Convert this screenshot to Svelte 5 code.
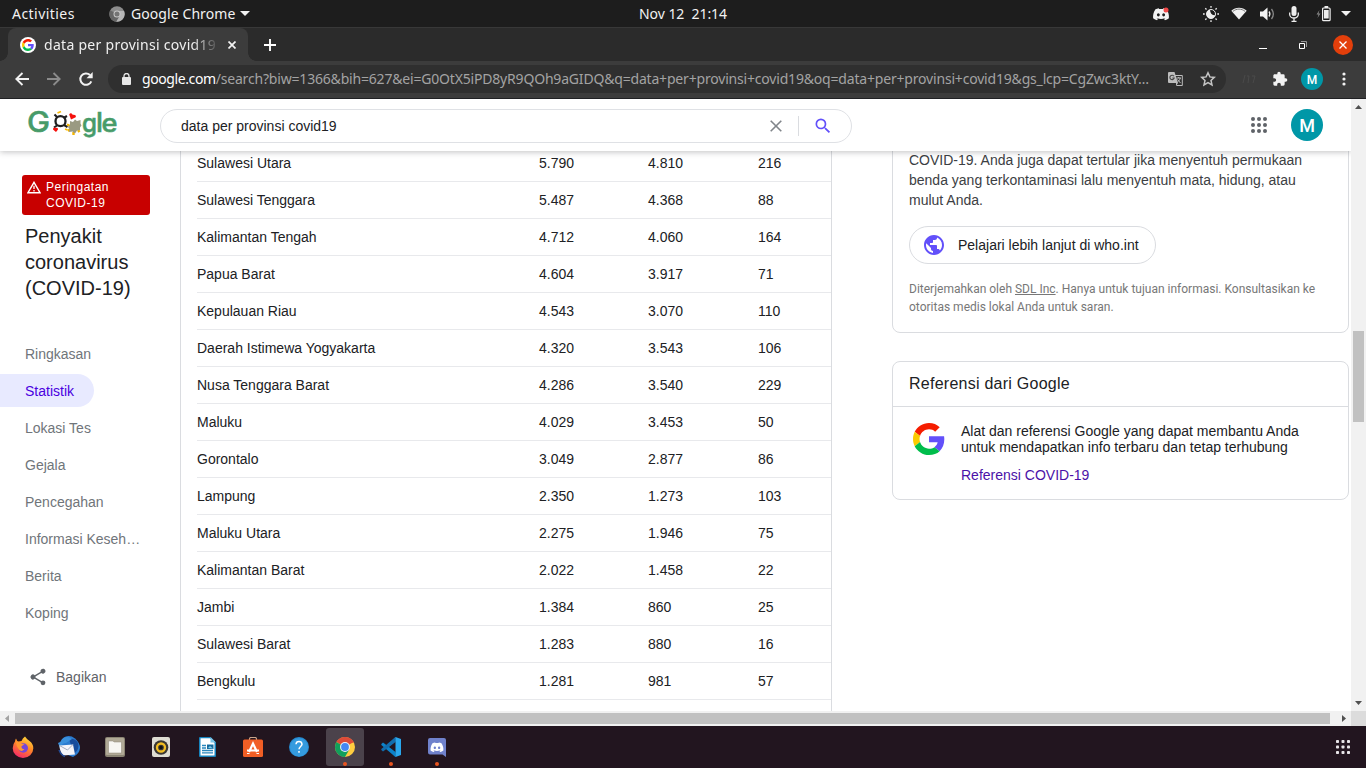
<script>
  const rows = [
    ['Sulawesi Utara', '5.790', '4.810', '216'],
    ['Sulawesi Tenggara', '5.487', '4.368', '88'],
    ['Kalimantan Tengah', '4.712', '4.060', '164'],
    ['Papua Barat', '4.604', '3.917', '71'],
    ['Kepulauan Riau', '4.543', '3.070', '110'],
    ['Daerah Istimewa Yogyakarta', '4.320', '3.543', '106'],
    ['Nusa Tenggara Barat', '4.286', '3.540', '229'],
    ['Maluku', '4.029', '3.453', '50'],
    ['Gorontalo', '3.049', '2.877', '86'],
    ['Lampung', '2.350', '1.273', '103'],
    ['Maluku Utara', '2.275', '1.946', '75'],
    ['Kalimantan Barat', '2.022', '1.458', '22'],
    ['Jambi', '1.384', '860', '25'],
    ['Sulawesi Barat', '1.283', '880', '16'],
    ['Bengkulu', '1.281', '981', '57']
  ];
  const nav = ['Ringkasan', 'Statistik', 'Lokasi Tes', 'Gejala', 'Pencegahan', 'Informasi Keseh…', 'Berita', 'Koping'];
  const dots = [0, 1, 2, 3, 4, 5, 6, 7, 8];
</script>

{#snippet googleG()}
  <path fill="#f51d00" d="M24 9.5c3.54 0 6.71 1.22 9.21 3.6l6.85-6.85C35.9 2.38 30.47 0 24 0 14.62 0 6.51 5.38 2.56 13.22l7.98 6.19C12.43 13.72 17.74 9.5 24 9.5z" />
  <path fill="#6250fa" d="M46.98 24.55c0-1.57-.15-3.09-.38-4.55H24v9.02h12.94c-.58 2.96-2.26 5.48-4.78 7.18l7.73 6c4.51-4.18 7.09-10.36 7.09-17.65z" />
  <path fill="#fbcb00" d="M10.53 28.59c-.48-1.45-.76-2.99-.76-4.59s.27-3.14.76-4.59l-7.98-6.19C.92 16.46 0 20.12 0 24c0 3.88.92 7.54 2.56 10.78l7.97-6.19z" />
  <path fill="#00bd4b" d="M24 48c6.48 0 11.93-2.13 15.89-5.81l-7.73-6c-2.15 1.45-4.92 2.3-8.16 2.3-6.26 0-11.57-4.22-13.47-9.91l-7.98 6.19C6.51 42.62 14.62 48 24 48z" />
{/snippet}

{#snippet discord(color)}
  <path fill={color} fill-rule="evenodd" d="M13.55 3.2A13 13 0 0 0 10.3 2.2l-.42.86a12 12 0 0 0-3.76 0L5.7 2.2a13 13 0 0 0-3.25 1C.4 6.3-.15 9.3.12 12.25A13 13 0 0 0 4.1 14.2l.85-1.35-1.3-.65.3-.25a9.400 9.400 0 0 0 8.1 0l.3.25-1.3.65.85 1.35a13 13 0 0 0 3.98-1.950c.35-3.400-.55-6.400-2.330-9.050zM5.350 10.400c-.800 0-1.430-.720-1.430-1.600s.600-1.600 1.430-1.600 1.450.720 1.430 1.600c0 .880-.640 1.600-1.430 1.600zm5.300 0c-.790 0-1.430-.720-1.430-1.600s.600-1.600 1.430-1.600 1.450.720 1.430 1.600c0 .880-.630 1.600-1.430 1.600z" />
{/snippet}

<div class="screen">
  <div class="topbar">
    <span class="activities">Activities</span>
    <svg class="app-ico" width="16" height="16" viewBox="0 0 16 16">
      <circle cx="8" cy="8" r="7.700" fill="#8c8c8c" />
      <path d="M8 8 1.300 4.200A7.700 7.700 0 0 0 7.300 15.700L10.500 10z" fill="#666" />
      <path d="M8 5h7a7.700 7.700 0 0 1-7.700 10.700L11 9.500z" fill="#b5b5b5" />
      <circle cx="8" cy="8" r="3.500" fill="#c8c8c8" />
      <circle cx="8" cy="8" r="2.500" fill="#747474" />
    </svg>
    <span class="appname">Google Chrome</span>
    <svg class="down" width="10" height="5" viewBox="0 0 10 5"><path d="M0 0h10L5 5z" fill="#f2f2f2" /></svg>
    <span class="clock">Nov 12&nbsp; 21:14</span>
    <div class="tray">
      <svg width="18" height="16" viewBox="0 0 18 16">
        <g transform="translate(1 0)">{@render discord('#f2f2f2')}</g>
        <circle cx="14" cy="4" r="2.500" fill="#f04747" />
      </svg>
      <svg class="t2" width="16" height="16" viewBox="0 0 16 16" stroke="#eee" stroke-width="1.300">
        <path d="M8 0v1.700M8 14.300V16M0 8h1.700M14.300 8H16M2.300 2.300l1.200 1.200M12.500 12.500l1.200 1.200M2.300 13.700l1.200-1.200M12.500 3.500l1.200-1.200" />
        <circle cx="8" cy="8" r="4.500" fill="none" stroke-width="1" />
        <path d="M7 3.800a4.400 4.400 0 1 0 5.300 5.300Q7.500 10 7 3.800z" fill="#eee" stroke="none" />
      </svg>
      <svg class="t3" width="16" height="13" viewBox="0 0 16 13">
        <path d="M.3 3.800C4.500-.3 11.500-.3 15.700 3.800L8 12.500z" fill="#f2f2f2" />
        <path d="M1.800 4.500C5.500 1.300 10.500 1.300 14.200 4.500" stroke="#777" fill="none" />
      </svg>
      <svg class="t4" width="15" height="14" viewBox="0 0 15 14">
        <path d="M0 4.500h3L7.500.5v13L3 9.500H0z" fill="#f2f2f2" />
        <path d="M9 4.500q1.800 2.500 0 5" fill="none" stroke="#eee" stroke-width="1.300" />
        <path d="M11.500 2q3.700 5 0 10" fill="none" stroke="#888" stroke-width="1.300" />
      </svg>
      <svg class="t5" width="10" height="16" viewBox="0 0 10 16">
        <rect x="2.500" width="5" height="10" rx="2.500" fill="#eee" />
        <path d="M.7 6.500v2a4.300 3.500 0 0 0 8.600 0v-2M5 12v3M2.500 15.300h5" fill="none" stroke="#eee" stroke-width="1.300" />
      </svg>
      <svg class="t6" width="15" height="16" viewBox="0 0 15 16">
        <path d="M3.500 4 .5 8.500h2L1.500 12l3-4.500h-2z" fill="#888" />
        <rect x="6.600" y="2" width="7.500" height="12.700" rx="1" fill="none" stroke="#eee" stroke-width="1.200" />
        <path d="M8 4h4.700v8.500H8zM8.500 0h3.700v2H8.500z" fill="#eee" />
      </svg>
      <svg class="t7" width="10" height="5" viewBox="0 0 10 5"><path d="M0 0h10L5 5z" fill="#f2f2f2" /></svg>
    </div>
  </div>

  <div class="tabstrip">
    <div class="tab">
      <svg class="fav" width="16" height="16" viewBox="0 0 16 16">
        <circle cx="8" cy="8" r="8" fill="#fff" />
        <g transform="translate(2 2) scale(.25)">{@render googleG()}</g>
      </svg>
      <span class="tabtitle">data per provinsi covid19</span>
      <svg width="8" height="8" viewBox="0 0 8 8"><path d="M.5.5l7 7M7.500.5l-7 7" stroke="#f2f2f2" stroke-width="1.700" /></svg>
    </div>
    <svg class="plus" width="12" height="12" viewBox="0 0 12 12"><path d="M6 0v12M0 6h12" stroke="#fff" stroke-width="1.900" /></svg>
    <div class="winctl">
      <svg width="8" height="8" viewBox="0 0 8 8"><path d="M0 7.500h8" stroke="#fff" /></svg>
      <svg width="8" height="8" viewBox="0 0 8 8"><path d="M.5 2.500h5v5h-5z" fill="none" stroke="#fff" /><path d="M2 .5h5.500V6" fill="none" stroke="#999" /></svg>
      <svg width="20" height="20" viewBox="0 0 20 20"><circle cx="10" cy="10" r="10" fill="#e33f0b" /><path d="M6.500 6.500l7 7M13.500 6.500l-7 7" stroke="#fff" stroke-width="1.300" /></svg>
    </div>
  </div>

  <div class="toolbar">
    <svg class="back" width="14" height="14" viewBox="0 0 14 14"><path d="M14 7H1.500M7.500 1 1.300 7l6.200 6" fill="none" stroke="#f2f2f2" stroke-width="1.900" /></svg>
    <svg class="fwd" width="14" height="14" viewBox="0 0 14 14"><path d="M0 7h12.500M6.500 1l6.200 6-6.200 6" fill="none" stroke="#8b8b8b" stroke-width="1.900" /></svg>
    <svg class="reload" width="16" height="16" viewBox="0 0 16 16"><path d="M13.300 10.300A5.700 5.700 0 1 1 12 4" fill="none" stroke="#f2f2f2" stroke-width="2" /><path d="M14.700 1v6.200H8.500z" fill="#f2f2f2" /></svg>
    <div class="omni">
      <svg class="lock" width="9" height="12" viewBox="0 0 9 12"><rect y="4" width="9" height="8" rx="1" fill="#e8e8e8" /><path d="M2 5V3a2.500 2.500 0 0 1 5 0v2" fill="none" stroke="#e8e8e8" stroke-width="1.300" /></svg>
      <span class="url"><b>google.com</b><span class="path">/search?biw=1366&amp;bih=627&amp;ei=G0OtX5iPD8yR9QOh9aGIDQ&amp;q=data+per+provinsi+covid19&amp;oq=data+per+provinsi+covid19&amp;gs_lcp=CgZwc3ktY…</span></span>
      <svg class="trans" width="15" height="14" viewBox="0 0 15 14">
        <path d="M6 3.500h8.300v10H8.500" fill="none" stroke="#bdbdbd" />
        <path d="M1 0h5.500L10 11H1a1 1 0 0 1-1-1V1a1 1 0 0 1 1-1z" fill="#bdbdbd" />
        <path d="M6 4.300A2.200 2.200 0 1 0 6.200 6H4.300" fill="none" stroke="#444" stroke-width="1.100" />
        <path d="M8.500 6H13M10.700 5v1M12.300 6c-.5 2-1.500 3-2.600 3.800M9.500 7.500l3 3.500" fill="none" stroke="#bdbdbd" />
        <path d="M10 11l-2 3V11z" fill="#bdbdbd" />
      </svg>
      <svg class="star" width="16" height="16" viewBox="0 0 16 16"><path d="M8 1.800l1.900 4.100 4.400.5-3.300 3 1 4.500L8 11.600l-4 2.300 1-4.500-3.300-3 4.400-.5z" fill="none" stroke="#c4c4c4" stroke-width="1.500" /></svg>
    </div>
    <svg class="faint" width="14" height="10" viewBox="0 0 14 10"><path d="M1 9l2-8M6 9l1-7h-2M11 9l2-7h-3" fill="none" stroke="#4a4a4a" /></svg>
    <svg class="puzzle" width="16" height="16" viewBox="0 0 24 24"><path fill="#f2f2f2" d="M20.500 11H19V7a2 2 0 0 0-2-2h-4V3.500a2.500 2.500 0 0 0-5 0V5H4c-1.100 0-1.990.9-1.990 2v3.800H3.500c1.490 0 2.700 1.210 2.700 2.700s-1.210 2.700-2.700 2.700H2V20a2 2 0 0 0 2 2h3.800v-1.500c0-1.490 1.210-2.700 2.700-2.700s2.700 1.210 2.700 2.700V22H17a2 2 0 0 0 2-2v-4h1.500a2.500 2.500 0 0 0 0-5z" /></svg>
    <span class="ava small">M</span>
    <svg class="kebab" width="4" height="14" viewBox="0 0 4 14" fill="#f2f2f2"><circle cx="2" cy="2" r="1.600" /><circle cx="2" cy="7" r="1.600" /><circle cx="2" cy="12" r="1.600" /></svg>
  </div>

  <div class="browser">
    <div class="page">
      <header>
        <svg class="logo" width="92" height="42" viewBox="0 -5 92 42" font-family="Inter, sans-serif" font-weight="500" fill="#479b69">
          <g stroke="#479b69" stroke-width=".5">
            <text x="0" y="22.500" font-size="28" textLength="23" lengthAdjust="spacingAndGlyphs">G</text>
            <text x="55" y="22.500" font-size="24.500" textLength="15" lengthAdjust="spacingAndGlyphs">g</text>
            <text x="69" y="22.500" font-size="27" textLength="7" lengthAdjust="spacingAndGlyphs">l</text>
            <text x="74.500" y="22.500" font-size="24.500" textLength="16" lengthAdjust="spacingAndGlyphs">e</text>
          </g>
          <circle cx="33.500" cy="12.200" r="5" fill="#fff" stroke="#202020" stroke-width="2.300" />
          <path d="M27.500 5.500l3 3M40 7l-3.500 2M27 18.500l3-2M40.500 18l-3.500-2" stroke="#202020" stroke-width="2.100" />
          <path d="M30.500 4l3.500-1.500M38 20l2.500 1" stroke="#fbbc05" stroke-width="1.800" />
          <path d="M29 23l-3-2.500q0-2.800 2.700-1.500 2.500-1 2.300 1.500z" fill="#f5100c" />
          <path d="M44 10.500l-1.800-5q1.500-2.500 3.500.3 4-.5 3 2.500z" fill="#f5100c" />
          <path d="M40 15.500l3 1.500M46.500 26v-3M41 22l2.500-2M52.500 23l-1.500-2" stroke="#f4b400" stroke-width="2.400" />
          <path d="M43 12l3 1 2-2.500 2 1.500 3.500-1v3.500l1 2-1.500 2v2.500l-3 .5-2 3-2.500-2-3.500.5.500-3-1.500-2 2-2z" fill="#9a9a82" />
        </svg>
        <div class="search">
          <span>data per provinsi covid19</span>
          <svg class="clear" width="12" height="12" viewBox="0 0 12 12"><path d="M.7.7l10.600 10.600M11.300.7.7 11.300" stroke="#80858a" stroke-width="1.600" /></svg>
          <i></i>
          <svg class="mag" width="20" height="20" viewBox="0 0 24 24"><path fill="#6250fa" d="M15.500 14h-.79l-.28-.27A6.471 6.471 0 0 0 16 9.500 6.500 6.500 0 1 0 9.500 16c1.610 0 3.090-.59 4.230-1.570l.27.28v.79l5 4.990L20.490 19l-4.990-5zm-6 0C7.010 14 5 11.990 5 9.500S7.010 5 9.500 5 14 7.010 14 9.500 11.990 14 9.500 14z" /></svg>
        </div>
        <svg class="apps" width="16" height="16" viewBox="0 0 16 16" fill="#5f6368">
          {#each dots as d}<circle cx={2 + (d % 3) * 6} cy={2 + Math.floor(d / 3) * 6} r="2" />{/each}
        </svg>
        <span class="ava">M</span>
      </header>
      <main>
        <aside>
          <div class="alert">
            <svg width="14" height="13" viewBox="0 0 14 13"><path d="M7 1.300 13 11.700H1z" fill="none" stroke="#fff" stroke-width="1.400" /><path d="M7 4.800v3.200M7 9v1.400" stroke="#fff" stroke-width="1.300" /></svg>
            <span>Peringatan<br />COVID-19</span>
          </div>
          <h1>Penyakit<br />coronavirus<br />(COVID-19)</h1>
          <nav>
            {#each nav as item}
              <div class="navitem" class:active={item === 'Statistik'}>{item}</div>
            {/each}
          </nav>
          <div class="share">
            <svg width="20" height="20" viewBox="0 0 24 24"><path fill="#5f6368" d="M18 16.080c-.76 0-1.440.3-1.960.77L8.910 12.700c.05-.23.09-.46.09-.7s-.04-.47-.09-.7l7.050-4.110A3 3 0 1 0 15 5c0 .24.04.47.09.7L8.040 9.810a3 3 0 1 0 0 4.380l7.120 4.160c-.05.21-.08.43-.08.65a2.920 2.920 0 1 0 2.920-2.920z" /></svg>
            <span>Bagikan</span>
          </div>
        </aside>
        <section class="tablecard">
          {#each rows as r}
            <div class="row">{#each r as cell}<span>{cell}</span>{/each}</div>
          {/each}
        </section>
        <div class="right">
          <section class="card info">
            <p>COVID-19. Anda juga dapat tertular jika menyentuh permukaan<br />benda yang terkontaminasi lalu menyentuh mata, hidung, atau<br />mulut Anda.</p>
            <div class="pill">
              <svg width="24" height="24" viewBox="0 0 24 24"><path fill="#6250fa" d="M12 2C6.480 2 2 6.480 2 12s4.480 10 10 10 10-4.480 10-10S17.520 2 12 2zm-1 17.930c-3.950-.49-7-3.850-7-7.930 0-.62.08-1.210.21-1.790L9 15v1c0 1.100.9 2 2 2v1.930zm6.900-2.540c-.26-.81-1-1.390-1.900-1.390h-1v-3c0-.55-.45-1-1-1H8v-2h2c.55 0 1-.45 1-1V7h2c1.100 0 2-.9 2-2v-.41c2.930 1.190 5 4.060 5 7.410 0 2.080-.8 3.970-2.100 5.390z" /></svg>
              <span>Pelajari lebih lanjut di who.int</span>
            </div>
            <small>Diterjemahkan oleh <u>SDL Inc</u>. Hanya untuk tujuan informasi. Konsultasikan ke<br />otoritas medis lokal Anda untuk saran.</small>
          </section>
          <section class="card refs">
            <h2>Referensi dari Google</h2>
            <div class="refbody">
              <svg width="32" height="32" viewBox="0 0 48 48">{@render googleG()}</svg>
              <div>
                <span class="desc">Alat dan referensi Google yang dapat membantu Anda<br />untuk mendapatkan info terbaru dan tetap terhubung</span>
                <span class="link">Referensi COVID-19</span>
              </div>
            </div>
          </section>
        </div>
      </main>
    </div>
    <div class="vscroll">
      <svg width="7" height="4" viewBox="0 0 7 4"><path d="M0 4h7L3.500 0z" fill="#505050" /></svg>
      <div class="vthumb"></div>
      <svg width="7" height="4" viewBox="0 0 7 4"><path d="M0 0h7L3.500 4z" fill="#505050" /></svg>
    </div>
    <div class="hscroll">
      <svg width="4" height="7" viewBox="0 0 4 7"><path d="M4 0v7L0 3.500z" fill="#a3a3a3" /></svg>
      <div class="hthumb"></div>
      <svg width="4" height="7" viewBox="0 0 4 7"><path d="M0 0v7l4-3.500z" fill="#505050" /></svg>
    </div>
    <div class="corner"></div>
  </div>

  <div class="dock">
    <div class="app">
      <svg width="22" height="22" viewBox="0 0 22 22">
        <defs><linearGradient id="ff" x1=".8" y1="0" x2=".3" y2="1"><stop offset="0" stop-color="#ffe13d" /><stop offset=".45" stop-color="#ff8a26" /><stop offset="1" stop-color="#f4276a" /></linearGradient></defs>
        <path d="M13 .5q2 3 4.500 4.500 4 3 3.800 7.500a10.300 9.500 0 0 1-20.600-.2Q.8 8 3 5.500q.3-2 1-3 .7 2.500 2.500 3l3-.5q1-3 3.500-4.500z" fill="url(#ff)" />
        <circle cx="11.300" cy="12" r="4.700" fill="#7646d8" />
        <path d="M4 6q4-.8 6 2l2.500.3-3 2q-.3 3 3 3-3 3-5.500.5Q4 10.500 4 6z" fill="#ff9730" />
      </svg>
    </div>
    <div class="app">
      <svg width="22" height="22" viewBox="0 0 22 22">
        <path d="M5 2Q11-2 17 2.500q5 4.500 5 9.500-.5 6-7 9l-5-2-7-9z" fill="#2b7bd0" />
        <path d="M11 3q6-1 9 4 2 6-4 11z" fill="#174c9c" />
        <path d="M0 7q3-1 4-4 5-4 10 0l-6 4q-4 0-6 5z" fill="#3a90dc" />
        <path d="M1.500 9.500 15 8.500l2 10L5 19.500Q1.500 15 1.500 9.500z" fill="#f5f5fa" />
        <path d="M1.500 9.500 9.500 14l5.500-5.500" fill="none" stroke="#a3acc0" />
        <path d="M1 14q2 5 6 6.500" fill="none" stroke="#244b96" stroke-width="1.500" />
      </svg>
    </div>
    <div class="app">
      <svg width="20" height="20" viewBox="0 0 20 20"><rect width="20" height="20" rx="2" fill="#8a8473" /><rect x="1" y="1" width="18" height="17" rx="1" fill="#b0a996" /><path d="M3.500 4H8l1 1h7.500v11h-13z" fill="#f7f6f2" stroke="#8c8676" stroke-width=".5" /></svg>
    </div>
    <div class="app">
      <svg width="18" height="20" viewBox="0 0 18 20"><rect width="18" height="20" rx="2" fill="#dfddd3" /><circle cx="9" cy="10.500" r="7.300" fill="#3a3732" /><circle cx="9" cy="10.500" r="4" fill="none" stroke="#f2bd22" stroke-width="2.300" /><circle cx="9" cy="10.500" r="1.700" fill="#111" /></svg>
    </div>
    <div class="app">
      <svg width="17" height="20" viewBox="0 0 17 20"><path d="M1 0h10.500L17 5.500V19a1 1 0 0 1-1 1H1a1 1 0 0 1-1-1V1a1 1 0 0 1 1-1z" fill="#1683bd" /><path d="M1.500 1.300h9.500l4.500 4.700v12.500h-14z" fill="#fff" /><path d="M11.500 0v5.500H17z" fill="#7ec7e8" /><path d="M3 8.500h4M3 11h4M3 13.500h11M3 15.800h11" stroke="#2886bd" stroke-width="1.300" /><path d="M8 7.500h6.500V12H8z" fill="#176b9d" /><path d="M9 11l2-2 3 2.500z" fill="#78cdf0" /></svg>
    </div>
    <div class="app">
      <svg width="20" height="20" viewBox="0 0 20 20"><path d="M6.500 4V2q0-1.500 1.500-1.500h4q1.500 0 1.500 1.500v2" fill="none" stroke="#c9a58c" stroke-width="1.200" /><rect y="2.500" width="20" height="17.500" rx="1.500" fill="#f15e25" /><path d="M6 15l4-8.500 4 8.500M4 13.500h12" fill="none" stroke="#fff" stroke-width="2.200" /><path d="M4 16.500h2.500M13.500 16.500H16" stroke="#fff" /></svg>
    </div>
    <div class="app help">
      <svg width="20" height="20" viewBox="0 0 20 20"><circle cx="10" cy="10" r="10" fill="#258bd2" /><circle cx="10" cy="10.300" r="9" fill="#359bdf" /><path d="M7 7.300Q7.200 4.500 10 4.500t3 2.700c0 2-3 2.600-3 5M10 14v1.800" fill="none" stroke="#fff" stroke-width="1.500" /></svg>
    </div>
    <div class="app active">
      <svg width="20" height="20" viewBox="0 0 20 20">
        <circle cx="10" cy="10" r="10" fill="#ffcd40" />
        <path d="M10 10 1.340 5A10 10 0 0 1 18.700 5z" fill="#dd4b39" />
        <path d="M10 10 1.340 5A10 10 0 0 0 10 20l4.300-7.500z" fill="#11a05c" />
        <path d="M10 5.500h8.900l-.2-.5-8.700-2z" fill="#dd4b39" />
        <circle cx="10" cy="10" r="5" fill="#eef1f5" /><circle cx="10" cy="10" r="3.900" fill="#4587f3" />
      </svg>
      <em></em>
    </div>
    <div class="app">
      <svg width="20" height="20" viewBox="0 0 20 20"><path d="M14.500 0 4.500 10l10 10v-4L7.500 10l7-5.800z" fill="#1479b9" /><path d="M.3 7 2 5.500 14.500 15v5L.3 8z" fill="#0c82c9" /><path d="M.3 13 2 14.500 14.500 5V0L.3 12z" fill="#126dad" /><path d="M14.500 0 20 2v16l-5.500 2z" fill="#29a7ed" /></svg>
      <em></em>
    </div>
    <div class="app">
      <svg width="18" height="19" viewBox="0 0 18 19"><path d="M2 0h14a2 2 0 0 1 2 2v17l-3.500-2.500H2a2 2 0 0 1-2-2V2a2 2 0 0 1 2-2z" fill="#7082cc" /><g transform="translate(2.500 2.600) scale(.81)">{@render discord('#fff')}</g></svg>
      <em></em>
    </div>
    <svg class="grid" width="14" height="14" viewBox="0 0 14 14" fill="#e8e5e8">
      {#each dots as d}<rect x={(d % 3) * 5.500} y={Math.floor(d / 3) * 5.500} width="3" height="3" rx=".8" />{/each}
    </svg>
  </div>
</div>

<style>
  :global(body) { margin: 0; overflow: hidden; }
  * { box-sizing: border-box; }
  svg { display: block; flex: none; }
  .screen { width: 1366px; height: 768px; display: flex; flex-direction: column; font-family: 'Liberation Sans', Arial, sans-serif; font-size: 14px; color: #202124; overflow: hidden; white-space: nowrap; }
  .topbar, .tabstrip, .toolbar { font-family: 'Noto Sans', 'Open Sans', sans-serif; display: flex; align-items: center; }
  .topbar { position: relative; height: 27px; background: #1d1d1d; color: #f2f2f2; padding: 0 15px 0 12px; }
  .activities { width: 97px; letter-spacing: .45px; }
  .appname { margin-left: 6px; width: 105px; letter-spacing: .08px; }
  .down { margin-left: 4px; }
  .clock { position: absolute; left: 639px; letter-spacing: -.05px; }
  .tray { margin-left: auto; display: flex; align-items: center; }
  .t2 { margin-left: 33px; } .t3 { margin-left: 12px; } .t4 { margin-left: 13px; } .t5 { margin-left: 14px; } .t6 { margin-left: 17px; } .t7 { margin-left: 10px; }
  .tabstrip { height: 34px; background: #2b2b2b; border-top: 1px solid #383838; padding-left: 8px; }
  .tab { width: 240px; height: 33px; background: #3c3c3c; border-radius: 8px 8px 0 0; display: flex; align-items: center; padding: 0 12px; color: #f0f0f0; position: relative; }
  .tab::before, .tab::after { content: ''; position: absolute; bottom: 0; width: 8px; height: 8px; }
  .tab::before { left: -8px; background: radial-gradient(circle at 0 0, transparent 7.5px, #3c3c3c 8px); }
  .tab::after { right: -8px; background: radial-gradient(circle at 100% 0, transparent 7.5px, #3c3c3c 8px); }
  .tabtitle { margin-left: 8px; width: 176px; margin-right: 8px; margin-top: -1px; letter-spacing: .29px; -webkit-mask-image: linear-gradient(90deg, #000 84%, transparent); mask-image: linear-gradient(90deg, #000 84%, transparent); }
  .plus { margin-left: 16px; }
  .winctl { margin-left: auto; display: flex; align-items: center; gap: 32px; padding-right: 13px; }
  .winctl svg:last-child { margin-left: -6px; }
  .toolbar { height: 38px; background: #3c3c3c; border-bottom: 1px solid #202124; padding: 0 20px 1px 15px; }
  .fwd { margin-left: 18px; } .reload { margin-left: 17px; }
  .omni { width: 1118px; height: 28px; border-radius: 14px; background: #2f2f2f; margin-left: 14px; display: flex; align-items: center; padding-left: 14px; }
  .url { margin-left: 11px; width: 1007px; color: #a3a3a3; margin-top: -1px; }
  .url b { font-weight: 400; color: #fff; letter-spacing: -.4px; }
  .path { letter-spacing: -.187px; }
  .trans { margin-left: 19px; } .star { margin-left: 17px; }
  .faint { margin-left: 16px; } .puzzle { margin-left: 16px; }
  .ava { display: flex; align-items: center; justify-content: center; width: 32px; height: 32px; border-radius: 50%; background: #0097a7; color: #fff; font: 500 18px Roboto, sans-serif; padding-top: 1px; }
  .ava.small { width: 22px; height: 22px; font-size: 12px; margin-left: 13px; }
  .kebab { margin-left: auto; }
  .browser { height: 627px; display: grid; grid-template: 612px 15px / 1351px 15px; background: #fff; }
  .page { display: flex; flex-direction: column; overflow: hidden; }
  header { position: relative; z-index: 2; height: 52px; flex: none; background: #fff; box-shadow: 0 1px 6px rgba(32, 33, 36, .28); display: flex; align-items: center; padding-left: 27px; }
  .search { margin-left: 41px; margin-top: 2px; width: 692px; height: 34px; border: 1px solid #dfe1e5; border-radius: 17px; display: flex; align-items: center; padding-left: 20px; }
  .search span { width: 589px; }
  .search i { width: 1px; height: 20px; background: #dadce0; margin: 0 14px 0 16px; }
  .apps { margin-left: 399px; }
  header .ava { margin-left: 24px; }
  main { height: 560px; display: flex; }
  aside { width: 180px; padding-top: 24px; flex: none; }
  .alert { margin-left: 22px; width: 128px; height: 40px; border-radius: 3px; background: #c80000; color: #fff; display: flex; font-size: 12px; line-height: 16px; letter-spacing: .5px; padding: 4px 5px; gap: 5px; }
  .alert svg { margin-top: 2px; }
  h1 { margin: 8px 0 0 25px; font-size: 20px; font-weight: 400; line-height: 26px; }
  nav { margin-top: 36px; display: flex; flex-direction: column; gap: 4px; align-items: flex-start; }
  .navitem { height: 33px; line-height: 34px; padding: 0 20px 0 25px; color: #70757a; border-radius: 0 17px 17px 0; }
  .navitem.active { background: #e8eaff; color: #4a00e0; }
  .share { display: flex; align-items: center; margin: 38px 0 0 28px; gap: 8px; color: #5f6368; height: 20px; }
  .tablecard { width: 652px; margin-top: -6px; border: solid #dadce0; border-width: 0 1px; padding-left: 16px; height: 566px; flex: none; }
  .row { display: grid; grid-template-columns: 342px 109px 110px 1fr; height: 37px; line-height: 36px; border-bottom: 1px solid #e8e9ec; }
  .right { width: 457px; margin-left: 60px; }
  .card { border: 1px solid #dadce0; border-radius: 8px; }
  .info { height: 190px; margin-top: -8px; padding: 6px 16px; }
  .info p { margin: 0; line-height: 20px; color: #3c4043; }
  .pill { width: 247px; height: 38px; margin-top: 16px; border: 1px solid #dadce0; border-radius: 19px; display: flex; align-items: center; padding-left: 12px; gap: 12px; }
  small { display: block; margin-top: 16px; font: 12px/18px Roboto, sans-serif; color: #777; }
  .refs { margin-top: 28px; height: 139px; }
  h2 { margin: 0; height: 45px; line-height: 43px; font-size: 16px; font-weight: 400; letter-spacing: .25px; padding-left: 16px; border-bottom: 1px solid #dadce0; }
  .refbody { display: flex; gap: 16px; padding: 16px 20px; }
  .desc { display: block; line-height: 16px; }
  .link { display: block; line-height: 16px; margin-top: 12px; color: #4b11a8; }
  .vscroll { background: #f1f1f1; display: flex; flex-direction: column; align-items: center; padding: 6px 0; }
  .vthumb { width: 11px; height: 91px; background: #c1c1c1; margin: 222px 0 auto; }
  .hscroll { background: #f1f1f1; display: flex; align-items: center; padding: 0 5px; }
  .hthumb { width: 1315px; height: 11px; background: #c1c1c1; margin: 0 12px 0 6px; }
  .corner { background: #dcdcdc; }
  .dock { height: 42px; background: #22151f; display: flex; align-items: center; padding: 0 16px 0 4px; gap: 8px; }
  .app { position: relative; width: 38px; height: 38px; display: flex; align-items: center; justify-content: center; border-radius: 3px; }
  .app.active { background: #4b424b; }
  .app em { position: absolute; left: 17px; bottom: 0; width: 4px; height: 4px; border-radius: 50%; background: #e95420; }
  .grid { margin-left: auto; }
</style>
